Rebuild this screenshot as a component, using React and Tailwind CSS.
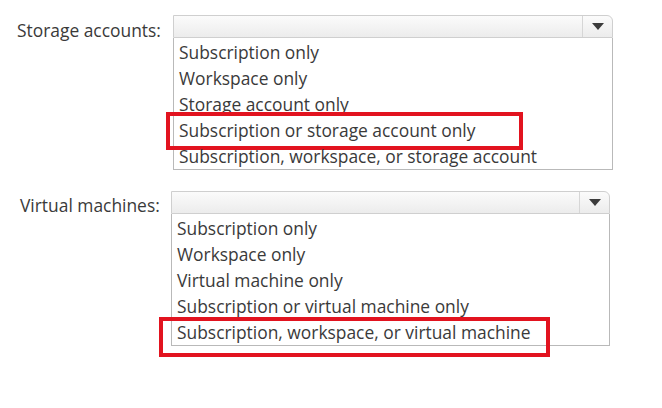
import React from 'react';

const Arrow = () => (
    <svg width="12" height="7" viewBox="0 0 12 7">
        <path d="M0 0 H12 L6 7 Z" fill="#3c3c3c" />
    </svg>
);

// Combo box with an open list below it
const DropList = ({ items, highlight, boxClass, redClass }) => (
    <div className={`flex flex-col ${boxClass}`}>
        <div className="h-[23px] flex border border-[#cfcfcf] rounded-tr-[6px] bg-gradient-to-b from-[#fbfbfb] to-[#ececec]">
            <div className="flex-1"></div>
            <div className="w-[30px] flex items-center justify-center border-l border-[#d6d6d6]">
                <Arrow />
            </div>
        </div>
        <ul className="border border-t-0 border-[#b9b9b9] bg-white pt-[1px]">
            {items.map((item, i) => (
                <li key={i} className="relative h-[26px] leading-[26px] pl-[5px] whitespace-nowrap">
                    {item}
                    {i === highlight && (
                        <div className={`absolute border-[4px] border-[#e2131f] pointer-events-none ${redClass}`}></div>
                    )}
                </li>
            ))}
        </ul>
    </div>
);

export default function App() {
    return (
        <div className="w-[662px] h-[408px] bg-white text-[#3a3a3a] text-[17.4px] font-['Open_Sans',sans-serif]">
            <div className="flex pt-[15px]">
                <div className="w-[173px] pl-[17px] pt-[2px] leading-[26px]">Storage accounts:</div>
                <DropList
                    boxClass="w-[440px]"
                    highlight={3}
                    redClass="left-[-8px] top-[-5px] w-[357px] h-[38px]"
                    items={[
                        'Subscription only',
                        'Workspace only',
                        'Storage account only',
                        'Subscription or storage account only',
                        'Subscription, workspace, or storage account',
                    ]}
                />
            </div>
            <div className="flex pt-[21px]">
                <div className="w-[171px] pl-[20px] pt-[1px] leading-[26px]">Virtual machines:</div>
                <DropList
                    boxClass="w-[439px]"
                    highlight={4}
                    redClass="left-[-13px] top-[-2px] w-[391px] h-[40px]"
                    items={[
                        'Subscription only',
                        'Workspace only',
                        'Virtual machine only',
                        'Subscription or virtual machine only',
                        'Subscription, workspace, or virtual machine',
                    ]}
                />
            </div>
        </div>
    );
}
